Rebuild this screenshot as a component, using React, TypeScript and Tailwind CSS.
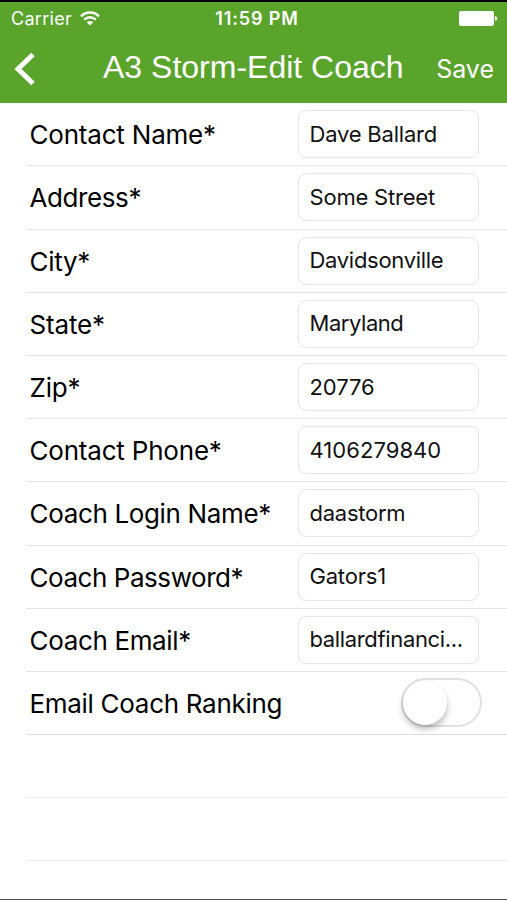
import { useState } from "react";

const fields = [
  { label: "Contact Name*", value: "Dave Ballard", labelClass: "tracking-[-0.2px]", valueClass: "tracking-[-0.2px]" },
  { label: "Address*", value: "Some Street", labelClass: "tracking-[-0.4px]", valueClass: "tracking-[-0.2px]" },
  { label: "City*", value: "Davidsonville", labelClass: "tracking-[-0.3px]", valueClass: "tracking-[-0.3px]" },
  { label: "State*", value: "Maryland", labelClass: "tracking-[-0.15px]", valueClass: "tracking-[-0.45px]" },
  { label: "Zip*", value: "20776", labelClass: "tracking-[-0.2px]", valueClass: "tracking-[-0.1px]" },
  { label: "Contact Phone*", value: "4106279840", labelClass: "tracking-[-0.2px]", valueClass: "tracking-[0.05px]" },
  { label: "Coach Login Name*", value: "daastorm", labelClass: "tracking-[-0.35px]", valueClass: "tracking-[-0.25px]" },
  { label: "Coach Password*", value: "Gators1", labelClass: "tracking-[-0.45px]", valueClass: "tracking-[-0.2px]" },
  { label: "Coach Email*", value: "ballardfinanci...", labelClass: "tracking-[-0.35px]", valueClass: "tracking-[-0.35px]" },
];

function StatusBar() {
  return (
    <div className="grid grid-cols-3 items-center h-[33px] pl-[11px] pr-[9px] text-[18px]">
      <div className="flex items-center gap-[8px]">
        <span className="tracking-[0.3px]">Carrier</span>
        <svg width="20" height="15" viewBox="0 0 20 15" fill="none" stroke="white" strokeWidth="2.4">
          <path d="M1 5.3C6 0.3 14 0.3 19 5.3" />
          <path d="M4.2 8.7C7.6 5.4 12.4 5.4 15.8 8.7" />
          <path d="M10 14.4L6.8 11.2C8.6 9.6 11.4 9.6 13.2 11.2Z" fill="white" stroke="none" />
        </svg>
      </div>
      <span className="pl-[5px] text-center font-semibold text-[18px] tracking-[0.85px] whitespace-nowrap">11:59 PM</span>
      <svg className="justify-self-end" width="39" height="15" viewBox="0 0 39 15" fill="white">
        <rect x="0" y="0" width="35" height="15" rx="2" />
        <path d="M36 5C39.2 5.8 39.2 9.2 36 10Z" />
      </svg>
    </div>
  );
}

function NavBar() {
  return (
    <div className="grid grid-cols-[103px_1fr_auto] items-center h-[67px] pr-[13px]">
      <button className="pl-[14px]">
        <svg width="21" height="34" viewBox="0 0 21 34" fill="none" stroke="white" strokeWidth="5">
          <path d="M19 2.5L4 17L19 31.5" />
        </svg>
      </button>
      <h1 className="pb-[3px] font-['Liberation_Sans',sans-serif] text-[32px] leading-[36px] whitespace-nowrap">A3 Storm-Edit Coach</h1>
      <button className="text-[25px] leading-[30px]">Save</button>
    </div>
  );
}

export default function App() {
  const [ranking, setRanking] = useState(false);

  return (
    <div className="flex flex-col w-[507px] h-[900px] overflow-hidden bg-white border-t-2 border-t-black border-b border-b-[#4a4a4a] font-['Inter',sans-serif] text-black">
      <header className="bg-[#5aa42c] text-white h-[101.2px] shrink-0">
        <StatusBar />
        <NavBar />
      </header>
      <main className="pl-[26px]">
        {fields.map((field) => (
          <div key={field.label} className="flex items-center justify-between h-[63.2px] pl-[3.5px] pr-7 border-b border-[#e4e4e4]">
            <label className={`pt-px text-[26px] whitespace-nowrap ${field.labelClass}`}>{field.label}</label>
            <div className="flex items-center w-[181px] h-[48px] pl-[10.5px] rounded-[8px] border border-[#e5e5e5]">
              <span className={`text-[22px] text-[#111] whitespace-nowrap ${field.valueClass}`}>{field.value}</span>
            </div>
          </div>
        ))}
        <div className="flex items-center justify-between h-[63.2px] pl-[3.5px] pr-[25px] border-b border-[#dcdcdc]">
          <span className="pt-px text-[26px] tracking-[-0.3px] whitespace-nowrap">Email Coach Ranking</span>
          <button
            role="switch"
            aria-checked={ranking}
            onClick={() => setRanking(!ranking)}
            className={`flex items-center w-[81px] h-[49px] rounded-full border-2 border-[#e0e0e0] ${ranking ? "justify-end bg-[#5aa42c]" : "bg-white"}`}
          >
            <span className="size-[44px] rounded-full bg-white shadow-[0_4px_6px_rgba(0,0,0,0.28)]" />
          </button>
        </div>
        <div className="h-[63.2px] border-b border-[#ebebeb]" />
        <div className="h-[63.2px] border-b border-[#ebebeb]" />
      </main>
    </div>
  );
}
